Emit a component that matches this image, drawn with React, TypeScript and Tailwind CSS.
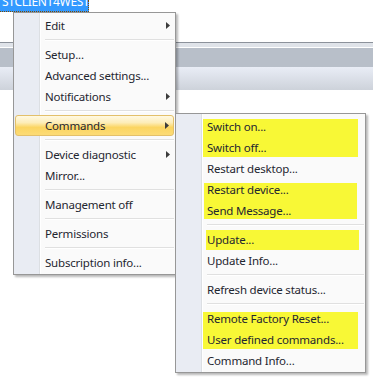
import type { ReactNode } from 'react'

type Item = { label: string; sub?: boolean; active?: boolean }
type Entry = Item | 'sep' | { mark: string; rows: Item[] }

const mainItems: Entry[] = [
  { label: 'Edit', sub: true },
  'sep',
  { label: 'Setup...' },
  { label: 'Advanced settings...' },
  { label: 'Notifications', sub: true },
  'sep',
  { label: 'Commands', sub: true, active: true },
  'sep',
  { label: 'Device diagnostic', sub: true },
  { label: 'Mirror...' },
  'sep',
  { label: 'Management off' },
  'sep',
  { label: 'Permissions' },
  'sep',
  { label: 'Subscription info...' },
]

// highlighter marks are drawn as a sized background on the wrapped rows
const commandItems: Entry[] = [
  {
    mark: 'bg-[length:155px_38px] bg-[position:26px_3px]',
    rows: [{ label: 'Switch on...' }, { label: 'Switch off...' }],
  },
  { label: 'Restart desktop...' },
  {
    mark: 'bg-[length:153px_36px] bg-[position:27px_4px]',
    rows: [{ label: 'Restart device...' }, { label: 'Send Message...' }],
  },
  'sep',
  {
    mark: 'bg-[length:153px_20px] bg-[position:29px_1px]',
    rows: [{ label: 'Update...' }],
  },
  { label: 'Update Info...' },
  'sep',
  { label: 'Refresh device status...' },
  'sep',
  {
    mark: 'bg-[length:155px_37px] bg-[position:26px_4px]',
    rows: [{ label: 'Remote Factory Reset...' }, { label: 'User defined commands...' }],
  },
  { label: 'Command Info...' },
]

function Arrow() {
  return (
    <svg width="4" height="7" viewBox="0 0 4 7" className="mr-[4px]">
      <polygon points="0,0 4,3.5 0,7" fill="#3c3c3c" />
    </svg>
  )
}

function Row({ it }: { it: Item }) {
  return (
    <div
      className={
        'h-[21px] flex items-center justify-between ' +
        (it.active
          ? 'border border-[#e3c06a] rounded-[3px] bg-[linear-gradient(to_bottom,#fff9e3_0%,#fdedb8_35%,#fbd561_60%,#fcdb76_100%)] pl-[29px]'
          : 'pl-[30px]')
      }
    >
      <span className="text-[11.5px] tracking-[-0.2px] leading-none text-[#1f2630]">{it.label}</span>
      {it.sub && <Arrow />}
    </div>
  )
}

function MenuRows({ items }: { items: Entry[] }) {
  return (
    <div className="flex flex-col">
      {items.map((it, i) => {
        if (it === 'sep')
          return (
            <div key={i} className="h-[8px] flex flex-col justify-center ml-[30px]">
              <div className="h-px bg-[#e0e0e0]" />
              <div className="h-px bg-white" />
            </div>
          )
        if ('rows' in it)
          return (
            <div key={i} className={'bg-[linear-gradient(#f8f836,#f8f836)] bg-no-repeat ' + it.mark}>
              {it.rows.map(r => (
                <Row key={r.label} it={r} />
              ))}
            </div>
          )
        return <Row key={i} it={it} />
      })}
    </div>
  )
}

function Menu({ className, children }: { className: string; children: ReactNode }) {
  return (
    <div
      className={
        'absolute border border-[#979797] shadow-[2px_2px_2px_rgba(0,0,0,0.28)] pt-[2px] px-[1px] ' +
        'bg-[linear-gradient(to_right,#e9ecf3_0px,#e9ecf3_25px,#dcdfe3_25px,#dcdfe3_26px,#ffffff_26px,#ffffff_27px,#fafafa_27px)] ' +
        className
      }
    >
      {children}
    </div>
  )
}

export default function App() {
  return (
    <div className="relative w-[373px] h-[380px] bg-white overflow-hidden" style={{ fontFamily: '"Segoe UI", "Noto Sans", sans-serif' }}>
      {/* selected node label, partly scrolled out */}
      <div className="h-[12px] w-[89px] overflow-hidden bg-[#3399ff] border-r border-b border-dotted border-[#7a4a00]">
        <div className="-mt-[5px] pl-[2px] text-[12px] leading-[14px] tracking-[-0.3px] text-white whitespace-nowrap">STCLIENT4WEST</div>
      </div>

      {/* grid header band behind the menus */}
      <div className="mt-[30px]">
        <div className="h-px bg-[#8c929b]" />
        <div className="h-[4px] bg-[#dfe3e9]" />
        <div className="h-px bg-white" />
        <div className="h-[19px] bg-[#b8bfc9]" />
        <div className="h-[23px] bg-[linear-gradient(to_bottom,#e9edf6,#cdd2da)]" />
      </div>

      <Menu className="left-[13px] top-[12px] w-[163px] h-[263px]">
        <MenuRows items={mainItems} />
      </Menu>

      <Menu className="left-[175px] top-[113px] w-[191px] h-[260px]">
        <MenuRows items={commandItems} />
      </Menu>
    </div>
  )
}
